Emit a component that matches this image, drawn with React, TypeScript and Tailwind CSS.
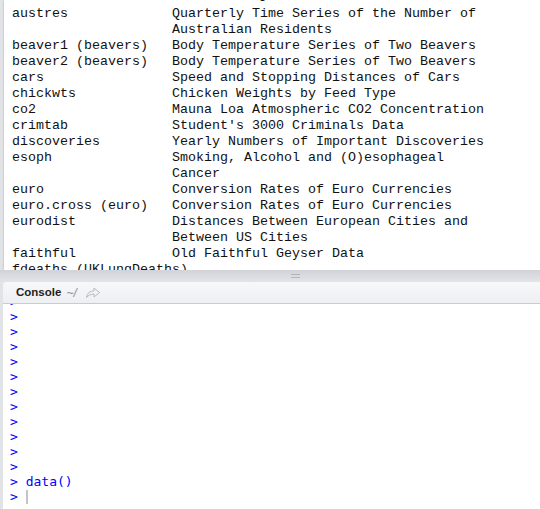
import React from "react";

type Row = { name: string; desc: string };

const rows: Row[] = [
  { name: "attitude", desc: "The Chatterjee-Price Attitude Data" },
  { name: "austres", desc: "Quarterly Time Series of the Number of" },
  { name: "", desc: "Australian Residents" },
  { name: "beaver1 (beavers)", desc: "Body Temperature Series of Two Beavers" },
  { name: "beaver2 (beavers)", desc: "Body Temperature Series of Two Beavers" },
  { name: "cars", desc: "Speed and Stopping Distances of Cars" },
  { name: "chickwts", desc: "Chicken Weights by Feed Type" },
  { name: "co2", desc: "Mauna Loa Atmospheric CO2 Concentration" },
  { name: "crimtab", desc: "Student's 3000 Criminals Data" },
  { name: "discoveries", desc: "Yearly Numbers of Important Discoveries" },
  { name: "esoph", desc: "Smoking, Alcohol and (O)esophageal" },
  { name: "", desc: "Cancer" },
  { name: "euro", desc: "Conversion Rates of Euro Currencies" },
  { name: "euro.cross (euro)", desc: "Conversion Rates of Euro Currencies" },
  { name: "eurodist", desc: "Distances Between European Cities and" },
  { name: "", desc: "Between US Cities" },
  { name: "faithful", desc: "Old Faithful Geyser Data" },
  { name: "fdeaths (UKLungDeaths)", desc: "" },
];

const emptyPrompts = Array.from({ length: 12 });

export default function App() {
  return (
    <div className="flex h-[509px] w-[540px] flex-col overflow-hidden bg-[#e2e3e7]">
      {/* data() output pane */}
      <div className="ml-[4px] h-[270px] shrink-0 overflow-hidden bg-white shadow-[0_1px_2px_rgba(0,0,0,0.25)]">
        <div
          className="mt-[-13px] pl-[8px] text-[13.33px] leading-[16px] text-[#111]"
          style={{ fontFamily: '"Liberation Mono", "Courier New", monospace' }}
        >
          {rows.map((r, i) => (
            <div
              key={i}
              className={i === 0 ? "flex h-[19px] whitespace-pre" : "flex h-[16px] whitespace-pre"}
            >
              <span className="w-[160px] shrink-0">{r.name}</span>
              <span>{r.desc}</span>
            </div>
          ))}
        </div>
      </div>

      {/* splitter */}
      <div className="relative h-[12px] shrink-0 bg-gradient-to-b from-[#d2d3d8] to-[#e3e4e8]">
        <div className="absolute left-[291px] top-[4px] flex flex-col gap-[2px]">
          <div className="h-px w-[9px] bg-[#b3b4ba]" />
          <div className="h-px w-[9px] bg-[#b3b4ba]" />
        </div>
      </div>

      {/* console pane */}
      <div className="ml-[3px] flex min-h-0 flex-1 flex-col overflow-hidden rounded-tl-[4px] bg-white">
        <div className="flex h-[22px] shrink-0 items-center border-b border-[#cbcbcf] bg-gradient-to-b from-[#f8f8fa] to-[#eeeff2] pl-[13px]">
          <span
            className="text-[11.5px] font-bold text-[#222]"
            style={{ fontFamily: '"Liberation Sans", Arial, sans-serif' }}
          >
            Console
          </span>
          <span
            className="ml-[5px] text-[12px] italic text-[#8a8a90]"
            style={{ fontFamily: '"Liberation Sans", Arial, sans-serif' }}
          >
            ~/
          </span>
          <svg width="16" height="13" viewBox="0 0 16 13" className="ml-[8px]">
            <path
              d="M1.5 11.5 C2 7 5 5 9 5 V2 L14.5 6.5 L9 11 V8 C6 8 3.5 9 1.5 11.5 Z"
              fill="none"
              stroke="#b8b9c0"
              strokeWidth="1"
              strokeLinejoin="round"
            />
          </svg>
        </div>
        <div
          className="flex min-h-0 flex-1 flex-col justify-end overflow-hidden pb-[5px] pl-[7px] text-[13px] leading-[15px] text-[#0000ff]"
          style={{ fontFamily: '"DejaVu Sans Mono", "Lucida Console", monospace' }}
        >
          {emptyPrompts.map((_, i) => (
            <div key={i} className="h-[15px] shrink-0 whitespace-pre">
              {">"}
            </div>
          ))}
          <div className="h-[15px] shrink-0 whitespace-pre">{"> data()"}</div>
          <div className="flex h-[15px] shrink-0 items-center whitespace-pre">
            <span>{"> "}</span>
            <span className="h-[14px] w-[2px] bg-[#c4c4c4]" />
          </div>
        </div>
      </div>
    </div>
  );
}
